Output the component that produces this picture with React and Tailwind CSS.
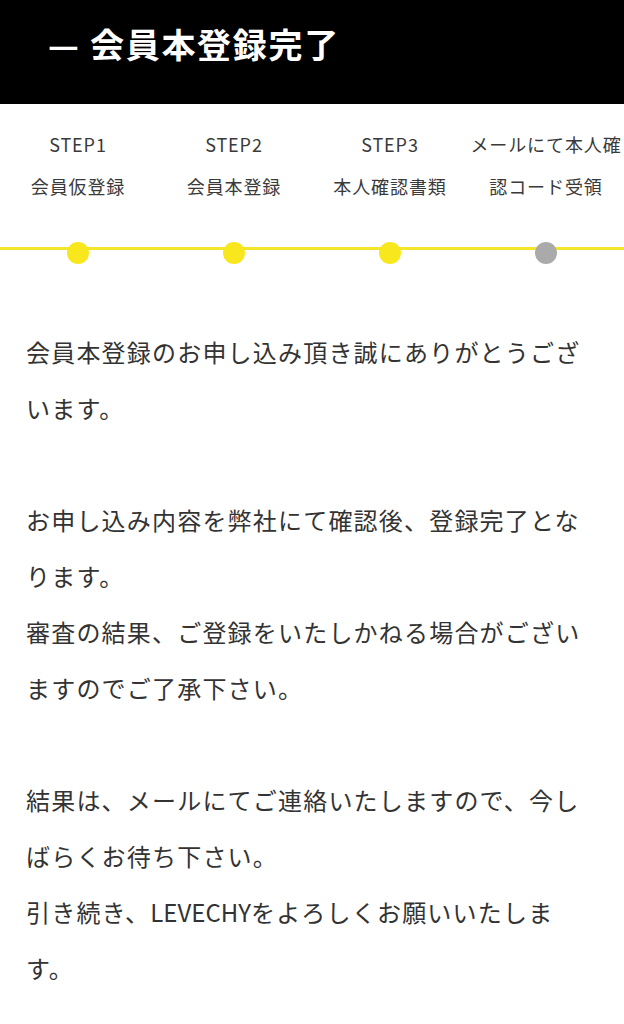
const steps = [
  { label: 'STEP1', name: '会員仮登録', done: true },
  { label: 'STEP2', name: '会員本登録', done: true },
  { label: 'STEP3', name: '本人確認書類', done: true },
  { label: null, name: 'メールにて本人確認コード受領', done: false },
]

export default function App() {
  return (
    <div
      className="min-h-screen bg-white text-[#333]"
      style={{ fontFamily: '"Noto Sans CJK JP", "Noto Sans", sans-serif' }}
    >
      {/* Header */}
      <header className="h-[104px] bg-black pl-[48px] pt-[20px]">
        <h1 className="text-[34px] leading-[48px] font-bold text-white tracking-[0.05em]">
          — 会員本登録完了
        </h1>
      </header>

      {/* Steps */}
      <section className="pt-[19px]">
        <div className="grid grid-cols-4 text-center text-[18px] leading-[42px] tracking-[0.05em] text-[#3a3a3a]">
          {steps.map((s, i) => (
            <div key={i} className="px-[2px]">
              {s.label && <div>{s.label}</div>}
              <div>{s.name}</div>
            </div>
          ))}
        </div>

        <div className="relative mt-[35px] h-[22px]">
          <div className="absolute left-0 right-0 top-[5px] h-[3px] bg-[#f5e52a]" />
          <div className="relative grid grid-cols-4">
            {steps.map((s, i) => (
              <div key={i} className="flex justify-center">
                <span
                  className={
                    s.done
                      ? 'block h-[22px] w-[22px] rounded-full bg-[#f8e71c]'
                      : 'block h-[22px] w-[22px] rounded-full bg-[#aaaaaa]'
                  }
                />
              </div>
            ))}
          </div>
        </div>
      </section>

      {/* Message */}
      <main className="px-[26px] pt-[60px] pb-[30px] text-[24px] leading-[56px] tracking-[0.05em]">
        <p>会員本登録のお申し込み頂き誠にありがとうございます。</p>
        <p className="mt-[56px]">
          お申し込み内容を弊社にて確認後、登録完了となります。
          <br />
          審査の結果、ご登録をいたしかねる場合がございますのでご了承下さい。
        </p>
        <p className="mt-[56px]">
          結果は、メールにてご連絡いたしますので、今しばらくお待ち下さい。
          <br />
          引き続き、<span className="tracking-normal">LEVECHY</span>をよろしくお願いいたします。
        </p>
      </main>
    </div>
  )
}
